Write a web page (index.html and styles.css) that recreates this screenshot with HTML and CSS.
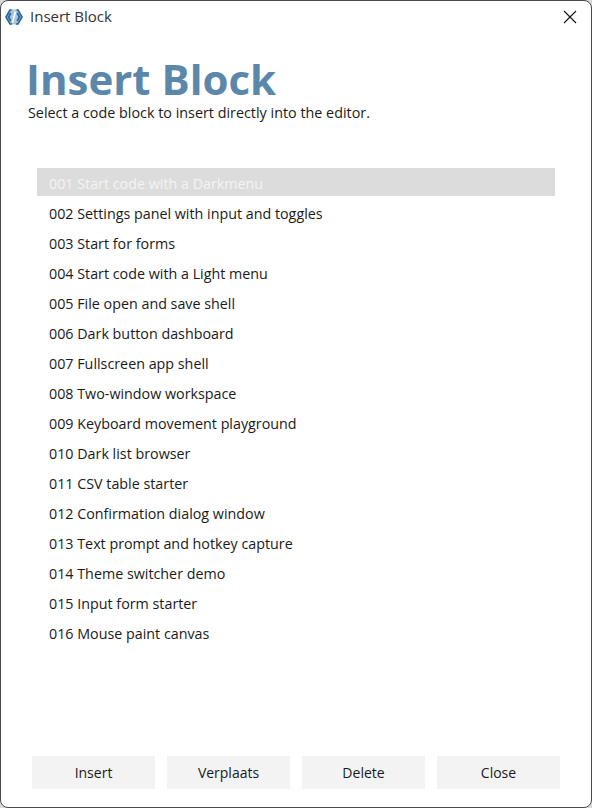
FILE: index.html
```html
<!DOCTYPE html>
<html lang="en">
<head>
<meta charset="utf-8">
<title>Insert Block</title>
<link rel="stylesheet" href="styles.css">
</head>
<body>
<div class="window">
  <header class="titlebar">
    <svg class="app-icon" viewBox="0 0 18 18" width="18" height="18" aria-hidden="true">
      <path d="M5 1.5 H13 L17.5 9 L13 16.5 H5 L0.5 9 Z" fill="#a9c6dd"/>
      <path d="M6.5 2 H5 L1 9 L5 16 H7 M5.8 5 L3.6 9 L5.8 13" fill="none" stroke="#2f6699" stroke-width="1.7"/>
      <path d="M11.5 2 H13 L17 9 L13 16 H11 M12.2 5 L14.4 9 L12.2 13" fill="none" stroke="#2f6699" stroke-width="1.7"/>
      <path d="M10.4 3.5 L7.6 14.5" fill="none" stroke="#fff" stroke-width="1.6"/>
    </svg>
    <span class="title-text">Insert Block</span>
    <svg class="close-x" viewBox="0 0 14 14" width="14" height="14" aria-hidden="true">
      <path d="M1 1 L13 13 M13 1 L1 13" stroke="#111" stroke-width="1.1" fill="none"/>
    </svg>
  </header>
  <main class="content">
    <h1 class="heading">Insert Block</h1>
    <p class="subtitle">Select a code block to insert directly into the editor.</p>
    <ul class="list">
      <li class="item selected">001 Start code with a Darkmenu</li>
      <li class="item">002 Settings panel with input and toggles</li>
      <li class="item">003 Start for forms</li>
      <li class="item">004 Start code with a Light menu</li>
      <li class="item">005 File open and save shell</li>
      <li class="item">006 Dark button dashboard</li>
      <li class="item">007 Fullscreen app shell</li>
      <li class="item">008 Two-window workspace</li>
      <li class="item">009 Keyboard movement playground</li>
      <li class="item">010 Dark list browser</li>
      <li class="item">011 CSV table starter</li>
      <li class="item">012 Confirmation dialog window</li>
      <li class="item">013 Text prompt and hotkey capture</li>
      <li class="item">014 Theme switcher demo</li>
      <li class="item">015 Input form starter</li>
      <li class="item">016 Mouse paint canvas</li>
    </ul>
  </main>
  <footer class="actions">
    <button class="btn">Insert</button>
    <button class="btn">Verplaats</button>
    <button class="btn">Delete</button>
    <button class="btn">Close</button>
  </footer>
</div>
</body>
</html>
```
FILE: styles.css
```css
* { box-sizing: border-box; }
html, body { margin: 0; height: 100%; background: #d9d9d9; }
body { font-family: "Open Sans", "Noto Sans", sans-serif; color: #1a1a1a; }
.window {
  width: 592px;
  height: 808px;
  background: #fff;
  border: 1px solid #4a4a4a;
  border-radius: 8px;
  display: flex;
  flex-direction: column;
  overflow: hidden;
}
.titlebar {
  height: 31px;
  flex: none;
  display: flex;
  align-items: center;
  padding-left: 4px;
}
.app-icon { flex: none; }
.title-text { margin-left: 7px; padding-bottom: 2px; font-size: 15px; color: #333; }
.close-x { margin-left: auto; margin-right: 14px; }
.content { flex: 1; padding: 0 31px 0 25px; }
.heading {
  margin: 23px 0 0;
  font-size: 42px;
  line-height: 47px;
  font-weight: 700;
  color: #5b87aa;
}
.subtitle { margin: 0 0 0 2px; font-size: 14.35px; line-height: 22px; color: #1a1a1a; }
.list { list-style: none; margin: 44px 5px 0 11px; padding: 0; display: flex; flex-direction: column; gap: 2px; }
.item { height: 28px; line-height: 28px; padding: 2px 0 0 12px; font-size: 14.3px; }
.item.selected { background: #dcdcdc; color: #f4f4f4; }
.actions { flex: none; display: flex; gap: 12px; padding: 0 0 18px 31px; }
.btn {
  width: 123px;
  height: 33px;
  border: 0;
  background: #f3f3f3;
  font: inherit;
  font-size: 14px;
  color: #1a1a1a;
  padding: 0;
}
```
